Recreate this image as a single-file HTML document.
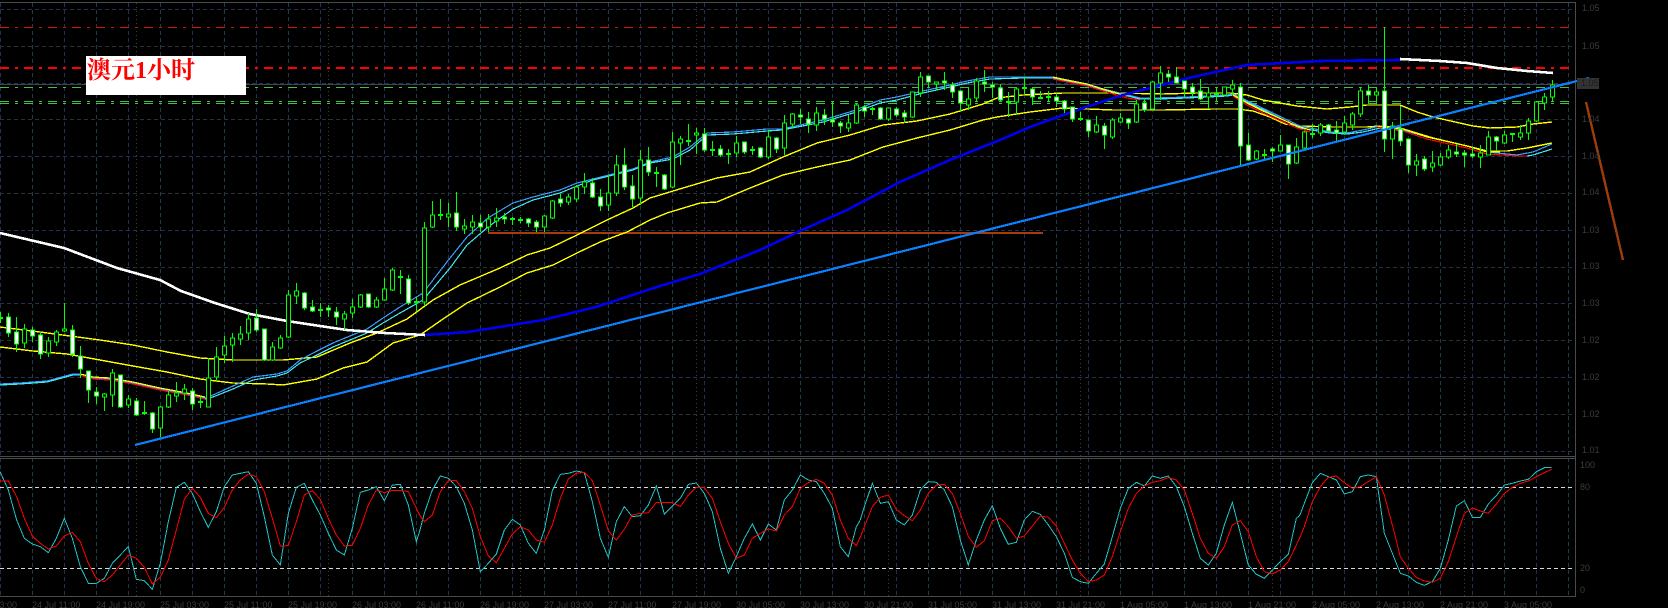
<!DOCTYPE html>
<html><head><meta charset="utf-8"><title>澳元1小时</title>
<style>html,body{margin:0;padding:0;background:#000;width:1668px;height:608px;overflow:hidden}svg{display:block}
.a{font:9px "Liberation Sans",sans-serif;fill:#3c3c3c}
</style></head><body>
<svg width="1668" height="608" viewBox="0 0 1668 608" xmlns="http://www.w3.org/2000/svg" shape-rendering="crispEdges">
<defs>
<pattern id="vg" patternUnits="userSpaceOnUse" x="0" y="3" width="64" height="600">
<path d="M.5 0V600" stroke="#202e58" stroke-dasharray="4 3" fill="none"/>
<path d="M32.5 0V600" stroke="#1e3c4a" stroke-dasharray="4 3" fill="none"/>
</pattern>
</defs>
<rect width="1668" height="608" fill="#000"/>
<rect x="0" y="3" width="1572" height="593" fill="url(#vg)"/>
<path d="M136.5 3V596M328.5 3V596M520.5 3V596M696.5 3V596M888.5 3V596M1080.5 3V596M1272.5 3V596M1464.5 3V596" stroke="#3c3c3c" stroke-dasharray="1 3" fill="none"/>
<path d="M0 9.5H1572M0 83.5H1572M0 156.5H1572M0 230.5H1572M0 303.5H1572M0 377.5H1572M0 451.5H1572" stroke="#252f50" stroke-dasharray="4 3" fill="none"/>
<path d="M0 46.5H1572M0 119.5H1572M0 193.5H1572M0 267.5H1572M0 340.5H1572M0 414.5H1572" stroke="#263234" stroke-dasharray="4 3" fill="none"/>
<!-- frame -->
<path d="M0 2.5H1575.5V596.5H0M0 456.5H1575.5M0 458.5H1575.5" stroke="#4a4a4a" fill="none"/>
<path d="M0 84.5H1570" stroke="#3e4458" fill="none"/>
<!-- level lines -->
<path d="M0 27.5H1570" stroke="#d81010" stroke-dasharray="9 6 3 6" fill="none"/>
<path d="M0 68H1570" stroke="#ff0000" stroke-width="2" stroke-dasharray="9 6 3 6" fill="none"/>
<path d="M0 87.5H1570M0 101.5H1570M0 103.5H1570" stroke="#3fc43f" stroke-dasharray="9 6 3 6" fill="none"/>
<!-- brown -->
<path d="M488 233H1043" stroke="#a83c08" stroke-width="2" fill="none"/>
<path d="M1586 102L1623 260" stroke="#9b3d0a" stroke-width="2.4" fill="none"/>
<!-- slow yellows -->
<polyline fill="none" stroke="#ffff00" stroke-width="1.4" points="0,327 40,332 100,340 133,345 167,352 200,358 233,360 283,360 317,357 350,343 377,333 407,319 433,300 460,285 500,268 527,255 550,248 577,235 607,220 633,208 650,198 683,188 717,178 750,172 783,157 817,143 850,135 883,125 917,121 950,114 983,104 997,98 1023,95 1063,93 1113,93 1163,94 1197,93 1230,93 1247,95 1263,100 1297,106 1327,109 1350,107 1367,105 1400,105 1417,112 1433,117 1473,126 1490,128 1517,127 1533,124 1552,122"/>
<polyline fill="none" stroke="#ffff00" stroke-width="1.4" points="0,347 33,351 67,354 100,360 133,366 167,372 200,379 233,383 267,384 283,385 317,379 343,368 367,362 393,343 420,335 443,319 467,303 500,287 527,273 553,265 577,253 600,242 627,232 650,220 667,213 700,203 717,202 750,188 783,175 817,167 850,160 883,147 917,138 950,130 983,120 997,117 1030,112 1063,108 1113,110 1163,110 1213,109 1237,109 1253,111 1270,117 1285,124 1300,126 1333,127 1367,127 1380,126 1400,128 1433,138 1467,146 1487,151 1507,151 1527,148 1552,143"/>
<!-- fast MAs -->
<polyline fill="none" stroke="#3a9cff" stroke-width="1.2" points="0,384 20,383 47,381 73,374 80,374 93,378 110,379 133,383 160,389 187,394 205,398 213,395 233,386 253,377 277,374 287,371 300,360 317,351 333,343 367,329 383,318 400,307 423,293 450,258 467,237 488,218 513,203 533,197 560,190 577,183 593,179 633,169 650,162 673,157 690,147 707,133 733,132 767,129 782,129 823,120 853,111 880,100 897,97 923,91 950,85 967,81 990,77 1023,77 1053,77 1067,80 1140,98 1157,98 1187,97 1227,95 1233,94 1300,126 1330,132 1347,133 1363,130 1380,126 1403,130 1427,137 1467,146 1487,152 1517,155 1533,152 1552,144"/>
<polyline fill="none" stroke="#40e6f0" stroke-width="1.2" points="0,385 20,384 47,382 73,375 80,375 93,379 110,380 133,384 160,390 187,395 205,399 213,397 233,389 253,380 277,376 287,373 300,363 317,355 333,347 367,333 383,323 400,313 423,300 450,268 467,245 488,227 513,209 533,200 560,193 577,186 593,180 633,170 650,163 673,159 690,150 707,135 733,134 767,131 782,130 823,122 853,113 880,103 897,100 923,93 950,87 967,83 990,79 1023,78 1053,78 1067,81 1140,99 1157,99 1187,98 1227,96 1233,95 1300,128 1330,133 1347,134 1363,132 1380,128 1403,131 1427,139 1467,148 1487,154 1517,156 1527,156 1533,155 1552,149"/>
<polyline fill="none" stroke="#ff0000" stroke-width="1.2" points="80,375 93,379 110,380 133,384 160,390 187,395 205,399"/>
<polyline fill="none" stroke="#ffff00" stroke-width="1.2" points="80,374 93,377 110,378 133,382 160,388 187,393 205,397"/>
<polyline fill="none" stroke="#ff0000" stroke-width="1.2" points="1053,79 1067,82 1087,86 1113,94 1127,98 1140,100"/>
<polyline fill="none" stroke="#ffff00" stroke-width="1.2" points="1053,77 1067,80 1087,84 1113,92 1127,96"/>
<polyline fill="none" stroke="#ff0000" stroke-width="1.2" points="1233,96 1247,105 1263,113 1297,128 1310,132"/>
<polyline fill="none" stroke="#ffff00" stroke-width="1.2" points="1233,95 1247,103 1263,111 1297,126 1310,130"/>
<polyline fill="none" stroke="#ff0000" stroke-width="1.2" points="1377,127 1403,131 1427,139 1467,148 1487,154 1517,156 1527,156"/>
<polyline fill="none" stroke="#ffff00" stroke-width="1.2" points="1377,126 1403,129 1427,137 1467,146 1487,152 1500,152"/>
<!-- thick MA -->
<polyline fill="none" stroke="#fff" stroke-width="2.6" points="0,233 64,248 117,268 160,280 181,291 215,303 250,314 287,321 320,326 347,330 385,333 425,335"/>
<polyline fill="none" stroke="#0000f0" stroke-width="2.6" points="425,335 468,332 543,320 596,307 660,286 700,274 760,250 800,231 847,210 900,182 950,160 1000,140 1030,127 1080,109 1123,95 1193,77 1247,65 1320,61 1400,60"/>
<polyline fill="none" stroke="#fff" stroke-width="2.6" points="1400,59 1440,61 1467,63 1497,68 1527,71 1553,73"/>
<!-- wicks -->
<path fill="none" stroke="#00ff00" d="M.5 312V323M8.5 313V337M16.5 317V352M24.5 324V348M32.5 327V342M40.5 332V359M48.5 337V357M56.5 330V346M64.5 303V332M72.5 325V357M80.5 346V378M88.5 371V403M96.5 387V404M104.5 393V411M112.5 369V407M120.5 375V408M128.5 395V408M136.5 398V416M144.5 401V415M152.5 412V433M160.5 406V437M168.5 391V408M176.5 382V402M184.5 384V400M192.5 388V410M200.5 397V408M208.5 358V407M216.5 347V382M224.5 336V363M232.5 333V362M240.5 326V345M248.5 313V340M256.5 309V332M264.5 329V361M272.5 342V361M280.5 335V349M288.5 290V338M296.5 283V304M304.5 292V310M312.5 300V312M320.5 303V317M328.5 305V317M336.5 307V325M344.5 311V330M352.5 299V318M360.5 294V308M368.5 294V308M376.5 297V308M384.5 278V301M392.5 268V291M400.5 270V294M408.5 275V305M416.5 297V311M424.5 222V306M432.5 201V228M440.5 199V220M448.5 203V227M456.5 192V231M464.5 219V234M472.5 215V234M480.5 215V232M488.5 214V232M496.5 208V227M504.5 213V224M512.5 217V225M520.5 217V223M528.5 218V227M536.5 220V232M544.5 215V232M552.5 200V219M560.5 194V207M568.5 194V205M576.5 185V202M584.5 173V194M592.5 178V198M600.5 189V211M608.5 175V211M616.5 155V196M624.5 148V190M632.5 175V207M640.5 150V205M648.5 147V176M656.5 167V187M664.5 174V190M672.5 132V188M680.5 136V165M688.5 124V146M696.5 128V154M704.5 128V152M712.5 141V156M720.5 145V157M728.5 149V164M736.5 136V157M744.5 142V154M752.5 146V155M760.5 147V158M768.5 130V159M776.5 137V153M784.5 115V155M792.5 113V128M800.5 109V124M808.5 112V133M816.5 107V131M824.5 109V125M832.5 102V127M840.5 121V133M848.5 115V132M856.5 104V124M864.5 105V117M872.5 107V115M880.5 107V120M888.5 108V121M896.5 107V117M904.5 110V123M912.5 92V118M920.5 72V97M928.5 76V88M936.5 82V90M944.5 72V90M952.5 82V98M960.5 90V112M968.5 87V110M976.5 78V102M984.5 70V92M992.5 82V98M1000.5 84V101M1008.5 92V117M1016.5 88V115M1024.5 77V95M1032.5 88V105M1040.5 91V99M1048.5 91V102M1056.5 93V107M1064.5 100V113M1072.5 107V122M1080.5 112V121M1088.5 120V137M1096.5 116V133M1104.5 123V149M1112.5 118V139M1120.5 113V123M1128.5 118V129M1136.5 100V123M1144.5 98V112M1152.5 81V110M1160.5 66V100M1168.5 70V82M1176.5 67V83M1184.5 81V97M1192.5 83V97M1200.5 79V100M1208.5 88V109M1216.5 87V101M1224.5 87V95M1232.5 80V95M1240.5 83V165M1248.5 133V161M1256.5 150V160M1264.5 149V160M1272.5 147V162M1280.5 135V151M1288.5 145V179M1296.5 138V164M1304.5 131V149M1312.5 124V138M1320.5 123V136M1328.5 124V132M1336.5 121V142M1344.5 116V135M1352.5 112V130M1360.5 87V117M1368.5 85V103M1376.5 88V103M1384.5 27V152M1392.5 122V159M1400.5 106V146M1408.5 139V173M1416.5 154V176M1424.5 156V171M1432.5 151V172M1440.5 153V166M1448.5 145V159M1456.5 144V157M1464.5 150V167M1472.5 147V158M1480.5 145V168M1488.5 131V155M1496.5 136V151M1504.5 131V144M1512.5 133V142M1520.5 125V140M1528.5 118V140M1536.5 101V122M1544.5 93V110M1552.5 80V102"/>
<!-- black bodies -->
<path fill="#000" stroke="#00ff00" d="M22.5 329h4v14h-4zM46.5 341h4v12h-4zM54.5 332h4v10h-4zM62.5 329h4v2h-4zM102.5 394h4v3h-4zM110.5 373h4v22h-4zM126.5 399h4v6h-4zM158.5 407h4v21h-4zM166.5 395h4v12h-4zM174.5 393h4v3h-4zM182.5 389h4v4h-4zM206.5 378h4v29h-4zM214.5 357h4v20h-4zM222.5 346h4v9h-4zM230.5 338h4v7h-4zM238.5 334h4v5h-4zM246.5 319h4v14h-4zM270.5 347h4v13h-4zM278.5 338h4v10h-4zM286.5 295h4v42h-4zM294.5 291h4v5h-4zM342.5 314h4v5h-4zM350.5 307h4v6h-4zM358.5 295h4v12h-4zM374.5 300h4v7h-4zM382.5 289h4v11h-4zM390.5 270h4v20h-4zM422.5 228h4v74h-4zM430.5 215h4v12h-4zM446.5 214h4v3h-4zM462.5 226h4v3h-4zM470.5 222h4v5h-4zM486.5 219h4v8h-4zM494.5 218h4v3h-4zM542.5 216h4v11h-4zM550.5 201h4v17h-4zM566.5 197h4v5h-4zM574.5 187h4v12h-4zM582.5 182h4v5h-4zM606.5 193h4v12h-4zM614.5 165h4v28h-4zM638.5 160h4v38h-4zM670.5 142h4v45h-4zM678.5 139h4v4h-4zM694.5 133h4v2h-4zM734.5 143h4v10h-4zM766.5 137h4v20h-4zM782.5 123h4v25h-4zM790.5 114h4v10h-4zM814.5 113h4v12h-4zM846.5 123h4v5h-4zM854.5 105h4v18h-4zM886.5 108h4v11h-4zM910.5 92h4v25h-4zM918.5 77h4v16h-4zM934.5 82h4v2h-4zM966.5 99h4v6h-4zM974.5 81h4v17h-4zM1014.5 89h4v13h-4zM1094.5 125h4v7h-4zM1110.5 120h4v17h-4zM1118.5 118h4v4h-4zM1134.5 104h4v18h-4zM1150.5 82h4v27h-4zM1158.5 73h4v10h-4zM1206.5 93h4v4h-4zM1222.5 87h4v8h-4zM1230.5 85h4v4h-4zM1254.5 151h4v8h-4zM1278.5 145h4v6h-4zM1294.5 147h4v16h-4zM1302.5 132h4v16h-4zM1318.5 125h4v8h-4zM1342.5 123h4v9h-4zM1350.5 114h4v11h-4zM1358.5 91h4v23h-4zM1374.5 92h4v3h-4zM1390.5 126h4v13h-4zM1414.5 161h4v4h-4zM1430.5 163h4v4h-4zM1438.5 157h4v8h-4zM1446.5 150h4v7h-4zM1478.5 153h4v4h-4zM1486.5 137h4v18h-4zM1502.5 135h4v8h-4zM1518.5 133h4v4h-4zM1526.5 121h4v12h-4zM1534.5 102h4v19h-4zM1542.5 97h4v6h-4zM1550.5 85h4v12h-4z"/>
<!-- white bodies -->
<path fill="#fff" stroke="#00ff00" d="M6.5 317h4v16h-4zM14.5 332h4v12h-4zM30.5 330h4v6h-4zM38.5 335h4v19h-4zM70.5 330h4v24h-4zM78.5 356h4v13h-4zM86.5 371h4v19h-4zM94.5 392h4v4h-4zM118.5 375h4v32h-4zM134.5 401h4v14h-4zM150.5 413h4v16h-4zM190.5 391h4v13h-4zM254.5 318h4v12h-4zM262.5 329h4v31h-4zM302.5 293h4v15h-4zM310.5 307h4v4h-4zM326.5 308h4v2h-4zM334.5 312h4v5h-4zM366.5 294h4v13h-4zM406.5 279h4v24h-4zM454.5 213h4v14h-4zM478.5 223h4v4h-4zM502.5 217h4v2h-4zM526.5 219h4v4h-4zM534.5 222h4v5h-4zM558.5 199h4v4h-4zM590.5 183h4v14h-4zM598.5 197h4v9h-4zM622.5 165h4v22h-4zM630.5 186h4v13h-4zM646.5 160h4v12h-4zM662.5 175h4v14h-4zM702.5 134h4v16h-4zM718.5 149h4v6h-4zM742.5 142h4v10h-4zM758.5 148h4v9h-4zM774.5 138h4v11h-4zM798.5 115h4v2h-4zM806.5 119h4v5h-4zM822.5 115h4v4h-4zM830.5 120h4v2h-4zM838.5 123h4v3h-4zM862.5 107h4v4h-4zM878.5 108h4v11h-4zM894.5 109h4v6h-4zM902.5 113h4v4h-4zM926.5 76h4v6h-4zM942.5 81h4v2h-4zM950.5 85h4v7h-4zM958.5 91h4v12h-4zM982.5 82h4v2h-4zM990.5 85h4v2h-4zM998.5 88h4v12h-4zM1030.5 89h4v8h-4zM1054.5 97h4v4h-4zM1062.5 101h4v8h-4zM1070.5 107h4v12h-4zM1086.5 120h4v11h-4zM1102.5 126h4v9h-4zM1126.5 119h4v4h-4zM1142.5 103h4v7h-4zM1166.5 74h4v3h-4zM1174.5 77h4v6h-4zM1182.5 81h4v8h-4zM1190.5 87h4v6h-4zM1198.5 91h4v8h-4zM1238.5 87h4v59h-4zM1246.5 145h4v15h-4zM1270.5 149h4v2h-4zM1286.5 145h4v19h-4zM1326.5 125h4v6h-4zM1334.5 130h4v3h-4zM1366.5 91h4v4h-4zM1382.5 91h4v48h-4zM1398.5 129h4v12h-4zM1406.5 139h4v26h-4zM1422.5 159h4v10h-4zM1454.5 152h4v2h-4zM1462.5 153h4v2h-4zM1470.5 154h4v2h-4zM1494.5 137h4v4h-4z"/>
<!-- dojis -->
<path fill="none" stroke="#00ff00" stroke-width="2" d="M0 318H3M142 413h5M198 402h5M318 310h5M414 302h5M398 277h5M438 215h5M510 219h5M518 220h5M654 173h5M686 141h5M710 150h5M726 154h5M750 150h5M870 109h5M1006 102h5M1022 88h5M1038 98h5M1046 97h5M1078 119h5M1214 94h5M1262 155h5M1310 134h5M1510 134h5"/>
<!-- trend -->
<path d="M135 445L1589 78" stroke="#0a80ff" stroke-width="2.2" fill="none"/>
<!-- label -->
<rect x="86" y="56" width="160" height="39" fill="#fff"/>
<text x="87" y="78" font-family="'Liberation Serif','Noto Serif CJK SC',serif" font-size="24" font-weight="700" fill="#ff0000" shape-rendering="auto">澳元1小时</text>
<!-- price axis -->
<rect x="1577" y="78" width="22" height="11" fill="#333"/>
<g class="a">
<text class="a" x="1582" y="11">1.05</text>
<text class="a" x="1582" y="49">1.05</text>
<text class="a" x="1581" y="86" style="fill:#1c1c1c">1.05</text>
<text class="a" x="1582" y="122">1.04</text>
<text class="a" x="1582" y="159">1.04</text>
<text class="a" x="1582" y="195">1.04</text>
<text class="a" x="1582" y="233">1.03</text>
<text class="a" x="1582" y="269">1.03</text>
<text class="a" x="1582" y="306">1.03</text>
<text class="a" x="1582" y="343">1.02</text>
<text class="a" x="1582" y="380">1.02</text>
<text class="a" x="1582" y="417">1.02</text>
<text class="a" x="1582" y="453">1.01</text>
<text class="a" x="1580" y="468">100</text>
<text class="a" x="1580" y="490">80</text>
<text class="a" x="1580" y="571">20</text>
<text class="a" x="1580" y="593">0</text>
</g>
<!-- stochastic levels -->
<path d="M0 487.5H1575M0 568.5H1575" stroke="#d8d8d8" stroke-dasharray="4 3" fill="none"/>
<!-- stochastic -->
<g fill="none" stroke-width="1" vector-effect="non-scaling-stroke">
<g transform="translate(0 450) scale(.33333)">
<polyline vector-effect="non-scaling-stroke" stroke="#20c4c4" points="0,65 25,120 50,210 73,265 97,282 121,290 145,308 169,265 193,205 217,265 241,350 265,400 289,400 313,385 337,340 361,315 385,290 409,388 433,392 457,418 481,340 505,215 529,112 553,97 577,130 601,185 625,232 649,185 673,110 697,75 721,70 745,65 769,100 793,200 817,315 841,345 865,190 889,112 913,100 937,150 961,195 985,250 1009,300 1033,315 1057,235 1081,127 1105,120 1129,110 1153,152 1177,105 1201,103 1225,165 1249,275 1260,240"/>
<polyline vector-effect="non-scaling-stroke" stroke="#ff0000" points="0,93 25,93 50,140 73,205 97,258 121,280 145,297 169,288 193,258 217,247 241,275 265,340 289,386 313,395 337,375 361,345 385,315 409,325 433,352 457,402 481,382 505,330 529,240 553,148 577,115 601,142 625,190 649,203 673,172 697,120 721,90 745,72 769,80 793,125 817,205 841,288 865,287 889,215 913,135 937,122 961,148 985,205 1009,255 1033,288 1057,286 1081,235 1105,165 1129,120 1153,128 1177,121 1201,121 1225,125 1249,175 1260,197"/>
</g>
<g transform="translate(420 450) scale(.33333)">
<polyline vector-effect="non-scaling-stroke" stroke="#20c4c4" points="0,240 13,190 37,120 61,78 85,85 109,110 133,160 157,240 181,365 205,340 229,312 253,240 277,208 301,225 325,280 349,310 373,240 397,122 421,73 445,70 469,63 493,68 517,155 541,265 565,322 589,215 613,170 637,200 661,197 685,165 709,108 733,192 757,168 781,145 805,103 829,99 853,130 877,185 901,295 925,370 949,320 973,265 997,222 1021,270 1045,222 1069,240 1093,150 1117,120 1141,75 1165,90 1189,95 1213,130 1237,175 1261,290 1285,320 1309,230 1320,212"/>
<polyline vector-effect="non-scaling-stroke" stroke="#ff0000" points="0,197 13,215 37,195 61,125 85,92 109,92 133,125 157,175 181,260 205,318 229,338 253,295 277,252 301,230 325,240 349,270 373,277 397,225 421,145 445,87 469,70 493,67 517,92 541,165 565,242 589,270 613,238 637,195 661,190 685,188 709,157 733,157 757,157 781,170 805,135 829,112 853,113 877,145 901,215 925,280 949,325 973,315 997,265 1021,250 1045,237 1069,243 1093,195 1117,170 1141,115 1165,98 1189,88 1213,100 1237,135 1261,210 1285,265 1309,287 1320,262"/>
</g>
<g transform="translate(860 450) scale(.33333)">
<polyline vector-effect="non-scaling-stroke" stroke="#20c4c4" points="0,212 13,170 37,100 61,160 85,155 109,210 133,225 157,195 181,120 205,95 229,97 253,120 277,170 301,270 325,345 349,270 373,210 397,167 421,235 445,283 469,277 493,210 517,184 541,193 565,225 589,260 613,310 637,382 661,395 685,400 709,370 733,342 757,260 781,175 805,115 829,97 853,108 877,78 901,85 925,78 949,110 973,170 997,250 1021,325 1045,345 1069,310 1093,225 1117,157 1141,250 1165,345 1189,373 1213,385 1237,360 1261,335 1285,313 1309,205 1320,195"/>
<polyline vector-effect="non-scaling-stroke" stroke="#ff0000" points="0,265 13,230 37,170 61,142 85,135 109,178 133,197 157,212 181,180 205,130 229,105 253,103 277,130 301,190 325,260 349,292 373,272 397,212 421,205 445,230 469,265 493,258 517,228 541,198 565,202 589,228 613,280 637,330 661,370 685,395 709,390 733,375 757,320 781,245 805,175 829,130 853,108 877,97 901,92 925,83 949,90 973,120 997,190 1021,265 1045,310 1069,325 1093,290 1117,225 1141,212 1165,245 1189,320 1213,365 1237,372 1261,360 1285,335 1309,285 1320,262"/>
</g>
<g transform="translate(1300 430) scale(.33333)">
<polyline vector-effect="non-scaling-stroke" stroke="#20c4c4" points="0,255 13,220 37,158 61,130 85,140 109,150 133,192 157,185 181,140 205,135 229,140 253,310 277,370 301,430 325,438 349,457 373,466 397,455 421,415 445,330 469,228 493,212 517,262 541,262 565,222 589,197 613,165 637,160 661,153 685,148 709,125 733,113 755,113"/>
<polyline vector-effect="non-scaling-stroke" stroke="#ff0000" points="0,322 13,290 37,215 61,170 85,142 109,138 133,158 157,175 181,170 205,155 229,140 253,195 277,285 301,380 325,415 349,442 373,453 397,457 421,445 445,395 469,320 493,250 517,234 541,243 565,250 589,222 613,190 637,172 661,160 685,153 709,140 733,128 755,118"/>
</g>
</g>
<!-- time axis -->
<g>
<text class="a" x="-32" y="608">24 Jul 03:00</text>
<text class="a" x="32" y="608">24 Jul 11:00</text>
<text class="a" x="96" y="608">24 Jul 19:00</text>
<text class="a" x="160" y="608">25 Jul 03:00</text>
<text class="a" x="224" y="608">25 Jul 11:00</text>
<text class="a" x="288" y="608">25 Jul 19:00</text>
<text class="a" x="352" y="608">26 Jul 03:00</text>
<text class="a" x="416" y="608">26 Jul 11:00</text>
<text class="a" x="480" y="608">26 Jul 19:00</text>
<text class="a" x="544" y="608">27 Jul 03:00</text>
<text class="a" x="608" y="608">27 Jul 11:00</text>
<text class="a" x="672" y="608">27 Jul 19:00</text>
<text class="a" x="736" y="608">30 Jul 05:00</text>
<text class="a" x="800" y="608">30 Jul 13:00</text>
<text class="a" x="864" y="608">30 Jul 21:00</text>
<text class="a" x="928" y="608">31 Jul 05:00</text>
<text class="a" x="992" y="608">31 Jul 13:00</text>
<text class="a" x="1056" y="608">31 Jul 21:00</text>
<text class="a" x="1120" y="608">1 Aug 05:00</text>
<text class="a" x="1184" y="608">1 Aug 13:00</text>
<text class="a" x="1248" y="608">1 Aug 21:00</text>
<text class="a" x="1312" y="608">2 Aug 05:00</text>
<text class="a" x="1376" y="608">2 Aug 13:00</text>
<text class="a" x="1440" y="608">2 Aug 21:00</text>
<text class="a" x="1504" y="608">3 Aug 05:00</text>
</g>
</svg>
</body></html>
